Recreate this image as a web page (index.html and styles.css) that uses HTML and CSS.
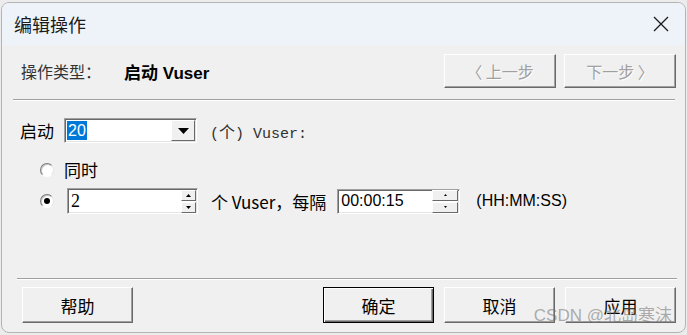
FILE: index.html
```html
<!DOCTYPE html>
<html lang="zh-CN">

<head>
    <meta charset="UTF-8">
    <meta name="viewport" content="width=device-width, initial-scale=1.0">
    <title>编辑操作</title>
    <link rel="stylesheet" href="styles.css">
</head>

<body>
    <div class="window">
        <div class="titlebar">
            <span class="title">编辑操作</span>
            <svg class="close" width="16" height="16" viewBox="0 0 16 16">
                <path d="M1 1 L15 15 M15 1 L1 15" stroke="#1b1b1b" stroke-width="1.3" fill="none"/>
            </svg>
        </div>

        <div class="header">
            <span class="field-label">操作类型：</span>
            <span class="op-type">启动 Vuser</span>
            <div class="nav">
                <button class="btn nav-btn" disabled>〈 上一步</button>
                <button class="btn nav-btn" disabled>下一步 〉</button>
            </div>
        </div>

        <div class="sep sep-top"></div>

        <div class="row row-start">
            <span class="label">启动</span>
            <div class="combo">
                <span class="combo-value"><span class="sel">20</span></span>
                <span class="combo-btn">
                    <svg width="11" height="6" viewBox="0 0 11 6"><path d="M0 0 H11 L5.5 6 Z" fill="#000"/></svg>
                </span>
            </div>
            <span class="mono">(<span class="cjk">个</span>) Vuser:</span>
        </div>

        <div class="row row-radio row-sim">
            <span class="radio"></span>
            <span class="label radio-label">同时</span>
        </div>

        <div class="row row-radio row-gradual">
            <span class="radio checked"></span>
            <div class="spin spin-count">
                <span class="spin-value">2</span>
                <span class="spin-btns">
                    <span class="spin-btn"><svg width="5" height="3" viewBox="0 0 5 3"><path d="M0 3 H5 L2.5 0 Z" fill="#000"/></svg></span>
                    <span class="spin-btn"><svg width="5" height="3" viewBox="0 0 5 3"><path d="M0 0 H5 L2.5 3 Z" fill="#000"/></svg></span>
                </span>
            </div>
            <span class="label every">个 Vuser，每隔</span>
            <div class="spin spin-time">
                <span class="spin-value">00:00:15</span>
                <span class="spin-btns">
                    <span class="spin-btn"><svg width="3" height="2" viewBox="0 0 3 2"><path d="M0 2 H3 L1.5 0 Z" fill="#000"/></svg></span>
                    <span class="spin-btn"><svg width="3" height="2" viewBox="0 0 3 2"><path d="M0 0 H3 L1.5 2 Z" fill="#000"/></svg></span>
                </span>
            </div>
            <span class="format">(HH:MM:SS)</span>
        </div>

        <div class="sep sep-bottom"></div>

        <div class="footer">
            <button class="btn foot-btn">帮助</button>
            <div class="foot-right">
                <button class="btn foot-btn default">确定</button>
                <button class="btn foot-btn">取消</button>
                <button class="btn foot-btn">应用</button>
            </div>
        </div>

        <div class="watermark">CSDN @北岛寒沫</div>
    </div>
</body>

</html>
```

FILE: styles.css
```css
body {
    margin: 0;
    background-color: #ececec;
    font-family: "Liberation Sans", "Noto Sans CJK SC", sans-serif;
    color: #000;
}

.window {
    position: relative;
    box-sizing: border-box;
    width: 685px;
    height: 331px;
    margin: 2px 0 0 1px;
    border: 1px solid #b4b4b4;
    border-radius: 8px;
    overflow: hidden;
    background-color: #f0f0f0;
}

.titlebar {
    display: flex;
    align-items: center;
    justify-content: space-between;
    height: 42px;
    padding: 0 16px 0 12px;
    background-color: #eef3f9;
}

.title {
    font-family: "Noto Sans CJK SC", sans-serif;
    font-size: 18px;
    color: #1b1b1b;
}

.header {
    display: flex;
    align-items: center;
    height: 34px;
    margin-top: 9px;
    padding: 0 9px 0 19px;
}

.field-label {
    width: 103px;
    font-family: "Noto Sans CJK SC", sans-serif;
    font-size: 16px;
    color: #333;
}

.op-type {
    font-size: 17px;
    font-weight: bold;
}

.nav {
    display: flex;
    gap: 8px;
    margin-left: auto;
}

/* classic raised button */
.btn {
    box-sizing: border-box;
    background-color: #f0f0f0;
    border: 1px solid;
    border-color: #fff #696969 #696969 #fff;
    box-shadow: inset -1px -1px 0 #a0a0a0;
    font-family: "Noto Sans CJK SC", sans-serif;
    color: #000;
    padding: 0;
}

.nav-btn {
    width: 112px;
    height: 34px;
    font-size: 16px;
}

.btn:disabled {
    color: #a0a0a0;
    text-shadow: 1px 1px 0 #fff;
}

.sep {
    height: 1px;
    background-color: #a0a0a0;
    border-bottom: 1px solid #fff;
}

.sep-top {
    margin: 11px 10px 0 11px;
}

.sep-bottom {
    margin: 64px 8px 0 15px;
}

.row {
    display: flex;
    align-items: center;
}

.label {
    font-family: "Noto Sans CJK SC", sans-serif;
    font-size: 17px;
}

.row-start {
    height: 25px;
    margin-top: 17px;
    padding-left: 18px;
}

.combo {
    box-sizing: border-box;
    display: flex;
    align-items: center;
    width: 133px;
    height: 25px;
    margin-left: 10px;
    background-color: #fff;
    border: 1px solid;
    border-color: #a0a0a0 #fff #fff #a0a0a0;
    box-shadow: inset 1px 1px 0 #696969, inset -1px -1px 0 #e3e3e3;
}

.combo-value {
    flex: 1;
    padding-left: 2px;
}

.sel {
    display: inline-block;
    padding: 0 1px;
    line-height: 19px;
    font-size: 16px;
    background-color: #0078d7;
    color: #fff;
}

.combo-btn {
    box-sizing: border-box;
    display: flex;
    align-items: center;
    justify-content: center;
    width: 24px;
    height: 21px;
    margin-right: 1px;
    background-color: #f0f0f0;
    border: 1px solid;
    border-color: #fff #696969 #696969 #fff;
}

.mono {
    margin-left: 13px;
    font-family: "Liberation Mono", monospace;
    font-size: 15px;
    color: #303030;
    white-space: pre;
}

.cjk {
    font-family: "Noto Sans CJK SC", sans-serif;
    font-size: 16px;
}

.row-radio {
    padding-left: 38px;
}

.row-sim {
    height: 25px;
    margin-top: 14px;
}

.row-gradual {
    height: 26px;
    margin-top: 6px;
}

.radio {
    box-sizing: border-box;
    display: flex;
    align-items: center;
    justify-content: center;
    width: 14px;
    height: 14px;
    border-radius: 50%;
    background-color: #fff;
    border: 1px solid;
    border-color: #7a7a7a #e6e6e6 #fff #7a7a7a;
    box-shadow: inset 1px 1px 0 #c8c8c8;
}

.radio.checked::after {
    content: "";
    width: 6px;
    height: 6px;
    border-radius: 50%;
    background-color: #000;
}

.radio-label {
    margin-left: 10px;
}

.spin {
    box-sizing: border-box;
    display: flex;
    align-items: center;
    background-color: #fff;
    border: 1px solid;
    border-color: #a0a0a0 #fff #fff #a0a0a0;
    box-shadow: inset 1px 1px 0 #696969, inset -1px -1px 0 #e3e3e3;
}

.spin-count {
    width: 131px;
    height: 26px;
    margin-left: 13px;
}

.spin-count .spin-value {
    font-family: "Liberation Serif", serif;
    font-size: 18px;
}

.spin-time {
    width: 123px;
    height: 25px;
    margin-left: 11px;
}

.spin-time .spin-value {
    font-size: 16px;
}

.spin-value {
    flex: 1;
    padding-left: 3px;
}

.spin-btns {
    display: flex;
    flex-direction: column;
    gap: 1px;
    margin-right: 1px;
}

.spin-btn {
    box-sizing: border-box;
    display: flex;
    align-items: center;
    justify-content: center;
    width: 15px;
    height: 11px;
    background-color: #f0f0f0;
    border: 1px solid;
    border-color: #fff #696969 #696969 #fff;
}

.spin-time .spin-btn {
    width: 26px;
}

.every {
    margin-left: 13px;
}

.format {
    margin-left: 16px;
    font-size: 16px;
}

.footer {
    display: flex;
    justify-content: space-between;
    height: 36px;
    margin-top: 7px;
    padding: 0 9px 0 20px;
}

.foot-right {
    display: flex;
    gap: 10px;
}

.foot-btn {
    width: 111px;
    height: 36px;
    font-size: 17px;
}

.foot-btn.default {
    border-color: #000;
    box-shadow: inset 1px 1px 0 #fff, inset -1px -1px 0 #696969, inset -2px -2px 0 #a0a0a0;
}

.watermark {
    position: absolute;
    right: 13px;
    bottom: 6px;
    font-family: "Liberation Sans", "Noto Sans CJK SC", sans-serif;
    font-size: 17px;
    color: rgba(110, 110, 110, 0.55);
    white-space: nowrap;
}
```
